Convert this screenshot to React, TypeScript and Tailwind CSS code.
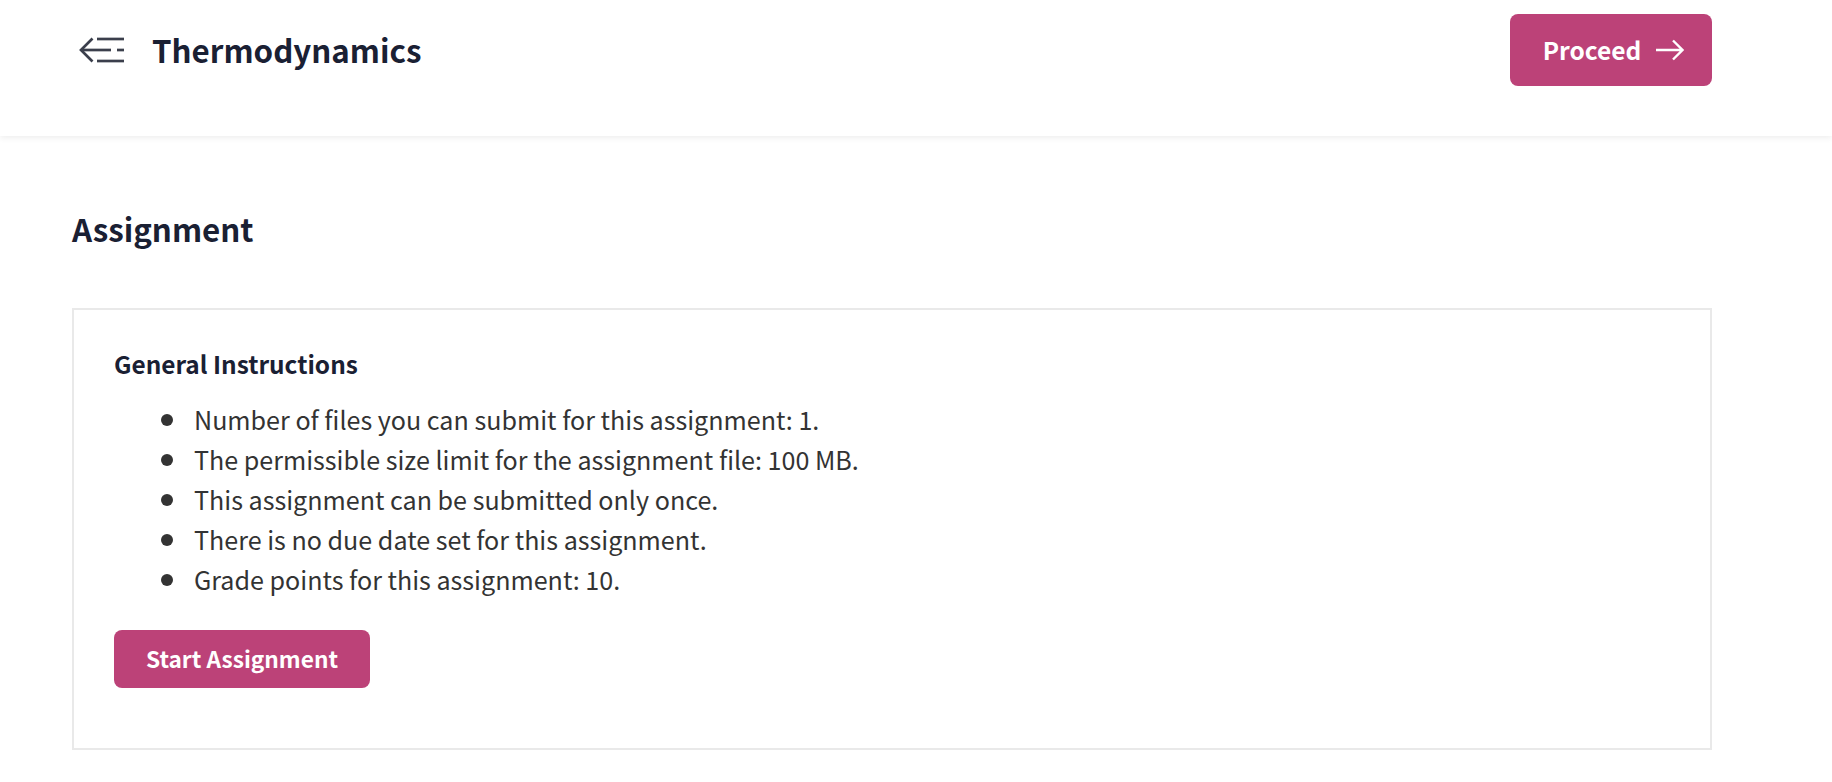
import React from "react";

const items = [
  "Number of files you can submit for this assignment: 1.",
  "The permissible size limit for the assignment file: 100 MB.",
  "This assignment can be submitted only once.",
  "There is no due date set for this assignment.",
  "Grade points for this assignment: 10.",
];

export default function App() {
  return (
    <div className="h-[782px] overflow-hidden bg-white font-['Noto_Sans_CJK_JP',sans-serif]">
      <header className="h-[136px] pl-[79px] pr-[120px] flex items-start justify-between bg-white shadow-[0_2px_6px_rgba(0,0,0,0.07)]">
        <div className="flex items-center h-[100px]">
          <svg width="46" height="26" viewBox="0 0 46 26" fill="none" stroke="#3b3f4c" strokeWidth="2.7" className="block">
            <path d="M13.5 1.5 L2 13 L13.5 24.5" />
            <path d="M2 13 H32" />
            <path d="M18 2 H45" />
            <path d="M38 13 H45" />
            <path d="M18 24 H45" />
          </svg>
          <h1 className="ml-[27px] text-[31.3px] leading-none font-bold text-[#1a2033]">Thermodynamics</h1>
        </div>
        <button className="mt-[14px] w-[202px] h-[72px] pl-[5px] rounded-[8px] bg-[#bc4278] text-white text-[24.5px] font-bold flex items-center justify-center gap-[15px]">
          <span>Proceed</span>
          <svg width="28" height="22" viewBox="0 0 28 22" fill="none" stroke="white" strokeWidth="2.4">
            <path d="M0 11 H26.5 M17 1.5 L26.5 11 L17 20.5" />
          </svg>
        </button>
      </header>
      <main className="pl-[72px] pr-[120px]">
        <h2 className="mt-[73px] text-[31.3px] leading-[40px] font-bold text-[#1a2033]">Assignment</h2>
        <section className="mt-[59px] h-[442px] border-2 border-[#e9e9e9] pl-[40px] pt-[37px]">
          <h3 className="text-[24.4px] leading-[34px] font-bold text-[#1a2033]">General Instructions</h3>
          <ul className="mt-[18px] pl-[47px] text-[25.1px] leading-[40px] text-[#333333]">
            {items.map((t) => (
              <li key={t} className="flex items-center gap-[21px]">
                <span className="mt-[2px] w-[12px] h-[12px] rounded-full bg-[#333333]" />
                <span>{t}</span>
              </li>
            ))}
          </ul>
          <button className="mt-[31px] block w-[256px] h-[58px] rounded-[8px] bg-[#bc4278] text-white text-[22.7px] font-bold">
            Start Assignment
          </button>
        </section>
      </main>
    </div>
  );
}
